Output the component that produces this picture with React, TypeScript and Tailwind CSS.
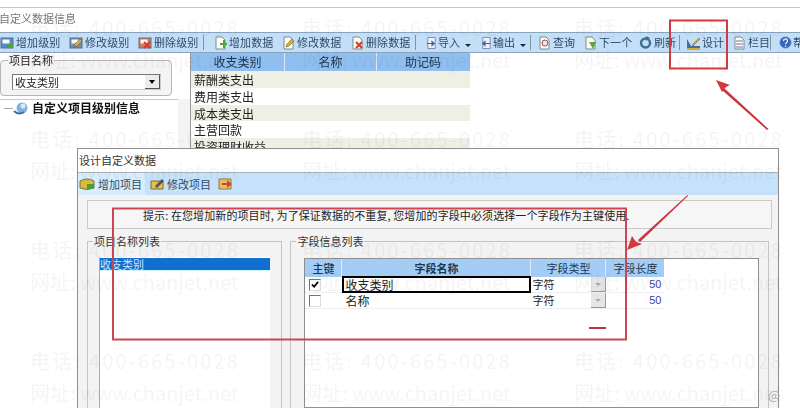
import React from "react";

const font = { fontFamily: '"Noto Sans CJK SC", "Liberation Sans", sans-serif' };

function Box({ c, accent }: { c: string; accent: React.ReactNode }) {
  return (
    <svg width="14" height="14" viewBox="0 0 14 14" className="shrink-0">
      <rect x="1" y="2" width="12" height="10" fill={c} stroke="#5b6f86" />
      <rect x="2.5" y="3.5" width="7" height="4" fill="#f5f8ff" />
      {accent}
    </svg>
  );
}

function Doc({ accent }: { accent: React.ReactNode }) {
  return (
    <svg width="14" height="14" viewBox="0 0 14 14" className="shrink-0">
      <path d="M3 1h6l3 3v9H3z" fill="#fdfdf4" stroke="#7d8a90" />
      {accent}
    </svg>
  );
}

const Green = <path d="M7 7h3V4h2v3h2v2h-2v3h-2V9H7z" fill="#4fa33c" />;
const Pen = <path d="M5 11l1-3 5-5 2 2-5 5z" fill="#d9b23a" stroke="#6e5a1b" strokeWidth="0.6" />;
const Cross = <path d="M6 6l6 6M12 6l-6 6" stroke="#d8392b" strokeWidth="2" />;

function Item({ className, icon, text, gap }: { className: string; icon: React.ReactNode; text: string; gap?: string }) {
  return (
    <div className={`flex items-center shrink-0 ${gap ?? "gap-[2px]"} ${className}`}>
      {icon}
      <span className="text-[11px] leading-none tracking-[0.1px] text-[#2f4a6a] whitespace-nowrap">{text}</span>
    </div>
  );
}

function Sep({ className }: { className: string }) {
  return <div className={`w-px h-[15px] bg-[#7f93a8] shrink-0 ${className}`} />;
}

function Caret() {
  return <span className="mt-[6px] w-0 h-0 border-x-[3px] border-x-transparent border-t-[3px] border-t-[#223] shrink-0" />;
}

function Arrow({ dir }: { dir: "in" | "out" }) {
  return (
    <svg width="12" height="14" viewBox="0 0 13 14" className="shrink-0">
      <path d="M3 1h8v12H3z" fill="#eef2fb" stroke="#7a86a8" />
      <path d={dir === "in" ? "M2 7h5V4l4 3.5L7 11V8H2z" : "M11 7H6V4L2 7.5 6 11V8h5z"} fill="#3c63b8" />
    </svg>
  );
}

function Toolbar() {
  return (
    <div className="h-[21px] flex items-center bg-[#c3dff7] border-y border-y-[#8aa3bd]">
      <Item className="w-[69px]" text="增加级别" icon={<Box c="#4e8fc9" accent={<path d="M7 8h6v4H7z" fill="#4fa33c" />} />} />
      <Item className="w-[69px]" text="修改级别" icon={<Box c="#6f8fb0" accent={Pen} />} />
      <Item className="w-[65px]" text="删除级别" icon={<Box c="#d77a5a" accent={Cross} />} />
      <Sep className="mr-[9px]" />
      <Item className="w-[68px]" text="增加数据" icon={<Doc accent={Green} />} />
      <Item className="w-[69px]" text="修改数据" icon={<Doc accent={Pen} />} />
      <Item className="w-[65px]" text="删除数据" icon={<Doc accent={Cross} />} />
      <Sep className="mr-[9px]" />
      <Item className="w-[37px]" gap="gap-px" text="导入" icon={<Arrow dir="in" />} />
      <span className="w-[3px] shrink-0" />
      <Caret />
      <span className="w-[9px] shrink-0" />
      <Item className="w-[35px]" gap="gap-px" text="输出" icon={<Arrow dir="out" />} />
      <span className="w-[5px] shrink-0" />
      <Caret />
      <span className="w-[4px] shrink-0" />
      <Sep className="mr-[6px]" />
      <Item className="w-[46px]" text="查询" icon={<Doc accent={<circle cx="8" cy="7" r="3" fill="#dfeaf6" stroke="#b14a3c" />} />} />
      <Item className="w-[56px]" text="下一个" icon={<Doc accent={<path d="M6 6h7l-3 7z" fill="#5aa63f" />} />} />
      <Item className="w-[40px]" text="刷新" icon={
        <svg width="13" height="13" viewBox="0 0 13 13" className="shrink-0">
          <circle cx="6.5" cy="7" r="4.5" fill="none" stroke="#3f6f8e" strokeWidth="2.4" />
          <path d="M7 0l4 2-4 3z" fill="#3f6f8e" />
        </svg>
      } />
      <Sep className="mr-[6px]" />
      <Item className="w-[46px]" gap="gap-px" text="设计" icon={
        <svg width="15" height="14" viewBox="0 0 15 14" className="shrink-0">
          <path d="M1 3v9h13v-2H5z" fill="#3d6fa8" />
          <path d="M1 12h13v2H1z" fill="#d4ad34" />
          <path d="M6 9l7-7 1 1-7 7z" fill="#d4ad34" stroke="#6f5a1e" strokeWidth="0.5" />
        </svg>
      } />
      <Item className="w-[38px]" text="栏目" icon={<Doc accent={<path d="M4 5h7M4 8h7M4 11h7" stroke="#7b6aa8" />} />} />
      <Sep className="mr-[8px]" />
      <Item className="w-[30px]" gap="gap-px" text="帮助" icon={
        <svg width="13" height="13" viewBox="0 0 13 13" className="shrink-0">
          <circle cx="6.5" cy="6.5" r="6" fill="#3768b8" stroke="#a9c2e6" />
          <path d="M4.5 5a2 2 0 1 1 3 1.7c-.7.4-1 .8-1 1.5M6.5 9.5v1.2" fill="none" stroke="#fff" strokeWidth="1.2" />
        </svg>
      } />
    </div>
  );
}

function LeftPane() {
  return (
    <div className="w-[190px] shrink-0 flex flex-col bg-white">
      <div className="relative mt-[7px] h-[36px] w-[172px] border border-[#b5b5b5] bg-[#f4f4f4] pt-[13px] pl-[11px] rounded-sm">
        <span className="absolute left-[7px] -top-[7px] bg-[#f4f4f4] px-px text-[11px] leading-[13px] text-[#222]">项目名称</span>
        <div className="w-[149px] h-[16px] bg-white border border-t-[#777] border-l-[#777] border-r-[#ccc] border-b-[#ccc] flex items-center justify-between pl-[2px]">
          <span className="text-[11px] leading-none text-[#222]">收支类别</span>
          <span className="w-[15px] h-[14px] bg-[#ececec] border-r border-b border-[#555] flex items-center justify-center">
            <span className="w-0 h-0 border-x-[3px] border-x-transparent border-t-[4px] border-t-black" />
          </span>
        </div>
      </div>
      <div className="mt-[3px] flex-1 flex">
        <div className="w-[178px] shrink-0 border-t border-t-[#c8c8c8] bg-white pl-[4px] flex items-start">
          <div className="w-[9px] h-px mt-[8px] bg-[#aaa]" />
          <svg width="16" height="16" viewBox="0 0 16 16" className="shrink-0 mr-[3px]">
            <circle cx="9" cy="8" r="5.5" fill="#7fb2df" />
            <circle cx="10" cy="6" r="2.5" fill="#d8eaf8" />
            <path d="M1 11c3 3 7 3 10 1" fill="none" stroke="#3d6fa8" strokeWidth="2" />
          </svg>
          <span className="text-[12px] leading-[16px] font-bold text-[#111] whitespace-nowrap">自定义项目级别信息</span>
        </div>
        <div className="flex-1 bg-[#f3f3f3]" />
      </div>
    </div>
  );
}

function DataGrid() {
  const rows = ["薪酬类支出", "费用类支出", "成本类支出", "主营回款", "投资理财收益"];
  return (
    <div className="w-[280px] shrink-0 border-l border-l-[#9a9a9a]">
      <div className="flex h-[18px] bg-[#8fbff0] text-[12px] leading-[18px] text-[#23344a] text-center">
        <div className="w-[94px] border-r border-r-[#dbe9f8]">收支类别</div>
        <div className="w-[92px] border-r border-r-[#dbe9f8]">名称</div>
        <div className="w-[92px]">助记码</div>
      </div>
      {rows.map((r, i) => (
        <div key={r} className={`h-[16.8px] flex text-[12px] leading-[17px] text-[#222] ${i % 2 === 0 ? "bg-[#efefe4]" : "bg-white"}`}>
          <div className="w-[94px] pl-[3px] whitespace-nowrap">{r}</div>
        </div>
      ))}
    </div>
  );
}

function Dialog() {
  return (
    <div className="absolute left-[77px] top-[148px] w-[702px] h-[262px] border border-[#8f8f8f] bg-white flex flex-col">
      <div className="h-[23px] pl-[1px] flex items-center text-[11px] text-[#333] bg-white">设计自定义数据</div>
      <div className="h-[23px] bg-[#c6e2fb] border-t border-t-[#a8b3bd] flex items-center">
        <div className="h-full w-[67px] bg-[#d8ecfc] flex items-center gap-[2px] shrink-0">
          <svg width="18" height="14" viewBox="0 0 18 14" className="shrink-0">
            <path d="M2 4q7-4 14 0v7q-7 3-14 0z" fill="#d9b93e" stroke="#6d7440" />
            <path d="M9 7h7v5H9z" fill="#4f9b3c" />
          </svg>
          <span className="text-[11px] text-[#2f4a6a] whitespace-nowrap">增加项目</span>
        </div>
        <div className="ml-[5px] w-[61px] flex items-center gap-[2px] shrink-0">
          <svg width="15" height="14" viewBox="0 0 15 14" className="shrink-0">
            <path d="M1 4h12v8H1z" fill="#e3c24a" stroke="#6f6a3a" />
            <path d="M5 9l7-7 2 2-7 7z" fill="#555" />
          </svg>
          <span className="text-[11px] text-[#2f4a6a] whitespace-nowrap">修改项目</span>
        </div>
        <svg width="15" height="14" viewBox="0 0 15 14" className="ml-[7px] shrink-0">
          <path d="M1 2h12v10H1z" fill="#e9bb62" stroke="#8e7a45" />
          <path d="M4 6h5V3l5 4-5 4V8H4z" fill="#d4452f" />
        </svg>
      </div>
      <div className="flex-1 bg-[#f3f3f3] px-[9px] pt-[5px] flex flex-col">
        <div className="h-[29px] w-[685px] border border-[#c9c9c9] bg-[#f6f6f6] pl-[55px] pt-[2px] flex items-center text-[11px] tracking-[0.1px] text-[#222] whitespace-nowrap">
          提示: 在您增加新的项目时, 为了保证数据的不重复, 您增加的字段中必须选择一个字段作为主键使用.
        </div>
        <div className="flex gap-[8px] mt-[12px] flex-1">
          <div className="relative w-[196px] border border-[#c4c4c4] pt-[15px] px-[11px] flex">
            <span className="absolute left-[5px] -top-[7px] bg-[#f3f3f3] px-px text-[11px] leading-[13px] text-[#333]">项目名称列表</span>
            <div className="flex-1 bg-white border-l border-l-[#aaa] pt-px">
              <div className="h-[12px] w-[170px] bg-[#0f70cf] text-[11px] leading-[12px] text-[#cfe5ff]">收支类别</div>
              <div className="h-px w-[170px] bg-[#cdf5fb]" />
            </div>
          </div>
          <div className="relative w-[480px] border border-[#c4c4c4] pt-[16px] pl-[13px] pr-[9px] flex">
            <span className="absolute left-[5px] -top-[7px] bg-[#f3f3f3] px-px text-[11px] leading-[13px] text-[#333]">字段信息列表</span>
            <div className="flex-1 bg-white border border-[#909090]">
              <div className="w-[359px]">
                <div className="flex h-[18px] bg-[#a3cdf5] text-[11px] leading-[18px] text-center text-[#22364f]">
                  <div className="w-[37px] border-r border-r-[#dbe9f8] font-medium">主键</div>
                  <div className="w-[189px] border-r border-r-[#dbe9f8] font-bold">字段名称</div>
                  <div className="w-[75px] border-r border-r-[#dbe9f8]">字段类型</div>
                  <div className="w-[58px]">字段长度</div>
                </div>
                {[
                  { name: "收支类别", on: true },
                  { name: "名称", on: false },
                ].map((r) => (
                  <div key={r.name} className="flex h-[16px] border-b border-b-[#eeeeee] text-[11px] leading-[15px]">
                    <div className="w-[37px] flex items-center pl-[4px]">
                      <div className="w-[12px] h-[12px] bg-white border border-t-[#777] border-l-[#777] border-r-[#ddd] border-b-[#ddd] flex items-center justify-center">
                        {r.on && (
                          <svg width="8" height="7" viewBox="0 0 9 8">
                            <path d="M1 4l2.5 2.5L8 1" fill="none" stroke="#000" strokeWidth="2" />
                          </svg>
                        )}
                      </div>
                    </div>
                    <div className={`w-[189px] text-[12px] text-[#222] ${r.on ? "border-2 border-black h-[17px] -mt-px pl-px leading-[13px]" : "pl-[3px]"}`}>{r.name}</div>
                    <div className="w-[75px] flex justify-between pl-[1px] text-[#222]">
                      <span>字符</span>
                      <span className="w-[15px] h-[15px] bg-[#e6e6e6] border-r border-b border-[#999] flex items-center justify-center">
                        <span className="w-0 h-0 border-x-[3px] border-x-transparent border-t-[3px] border-t-[#aaa]" />
                      </span>
                    </div>
                    <div className="w-[58px] text-right pr-[3px] text-[#3f3fa0]" style={{ fontFamily: '"Liberation Sans", sans-serif' }}>50</div>
                  </div>
                ))}
              </div>
            </div>
          </div>
        </div>
      </div>
    </div>
  );
}

function Annotations() {
  return (
    <svg className="absolute left-0 top-0 pointer-events-none" width="800" height="408" viewBox="0 0 800 408">
      <g fill="none" strokeWidth="2">
        <rect x="670" y="20.5" width="57" height="48" stroke="#d03a42" />
        <rect x="113" y="208.5" width="513" height="131" stroke="#cb4650" />
        <path d="M589 328h17" stroke="#c2313f" />
      </g>
      <path d="M768.5 129L724 88l-2 2 45 40z" fill="#cc3540" />
      <path d="M716 80l14 5-4 2-3 4-1 1z" fill="#d23a3f" />
      <path d="M687.5 195L638 240l2 2 48-46z" fill="#cc3540" />
      <path d="M627 250l5-14 4 6 6 2z" fill="#d23a3f" />
    </svg>
  );
}

function Watermark() {
  const rows = [0, 1, 2, 3];
  const cols = [0, 1, 2];
  return (
    <div className="absolute inset-0 pointer-events-none pl-[30px] pt-[12px] flex flex-col text-[#000000]/[0.045]">
      {rows.map((r) => (
        <div key={r} className="h-[111px] shrink-0">
          <div className="h-[32px] flex text-[20px] leading-[32px] tracking-[2.2px]">
            {cols.map((c) => (
              <span key={c} className="w-[272px] shrink-0 whitespace-nowrap">电话: 400-665-0028</span>
            ))}
          </div>
          <div className="h-[32px] flex text-[20px] leading-[32px]">
            {cols.map((c) => (
              <span key={c} className="w-[272px] shrink-0 whitespace-nowrap">网址: www.chanjet.net</span>
            ))}
          </div>
        </div>
      ))}
    </div>
  );
}

export default function App() {
  return (
    <div className="relative w-[800px] h-[408px] overflow-hidden bg-white" style={font}>
      <div className="flex flex-col h-full blur-[0.35px]">
        <div className="mt-[7px] h-[25px] pb-[4px] border-t border-t-[#c4c4c4] flex items-center text-[11px] text-[#777] whitespace-nowrap -ml-px">自定义数据信息</div>
        <Toolbar />
        <div className="flex flex-1">
          <LeftPane />
          <DataGrid />
        </div>
      </div>
      <div className="absolute inset-0 blur-[0.35px]">
        <Dialog />
        <Annotations />
        <Watermark />
        <span className="absolute left-[768px] top-[385px] text-[13px] text-[#aaa]">@</span>
      </div>
    </div>
  );
}
